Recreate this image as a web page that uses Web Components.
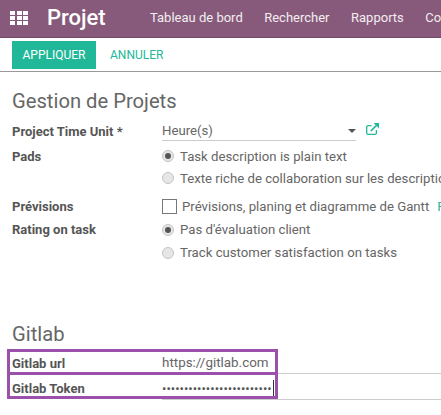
<!DOCTYPE html>
<html>
<head>
<meta charset="utf-8">
<style>
html,body{margin:0;padding:0;height:415px;width:441px;overflow:hidden;background:#fff;font-family:Roboto,"Liberation Sans",sans-serif;color:#4c4c4c}
</style>
</head>
<body>
<app-navbar>
  <nav-item>Tableau de bord</nav-item>
  <nav-item>Rechercher</nav-item>
  <nav-item>Rapports</nav-item>
  <nav-item>Configuration</nav-item>
</app-navbar>
<app-toolbar></app-toolbar>
<form-section title="Gestion de Projets" style="--top:17px">
  <form-row label="Project Time Unit *" style="--h:24px">
    <select-field value="Heure(s)"></select-field>
  </form-row>
  <form-row label="Pads" style="--h:22px;--mt:2px">
    <radio-option checked>Task description is plain text</radio-option>
  </form-row>
  <form-row style="--h:22px">
    <radio-option>Texte riche de collaboration sur les descriptions</radio-option>
  </form-row>
  <form-row label="Prévisions" style="--h:23px;--mt:6px">
    <check-option note="Pour">Prévisions, planing et diagramme de Gantt</check-option>
  </form-row>
  <form-row label="Rating on task" style="--h:23px">
    <radio-option checked>Pas d'évaluation client</radio-option>
  </form-row>
  <form-row style="--h:23px">
    <radio-option>Track customer satisfaction on tasks</radio-option>
  </form-row>
</form-section>
<form-section title="Gitlab" style="--top:58px">
  <form-row label="Gitlab url" style="--h:22px">
    <text-field>https://gitlab.com</text-field>
  </form-row>
  <form-row label="Gitlab Token" style="--h:23px;--mt:3px">
    <text-field password>•••••••••••••••••••••••••</text-field>
  </form-row>
  <mark-box style="left:7px;top:85px;width:271px;height:26px"></mark-box>
  <mark-box style="left:7px;top:108px;width:271px;height:27px"></mark-box>
</form-section>

<script>
function shadow(el, html){
    el.attachShadow({mode:'open'})
    el.shadowRoot.innerHTML = html
}

class AppNavbar extends HTMLElement{
    constructor(){
        super()
        let cells = ''
        for(let i = 0; i < 9; i++) cells += '<i></i>'
        shadow(this, `
        <style>
            :host{display:flex;align-items:center;height:35px;padding-bottom:2px;background:#875A7B;border-bottom:1px solid #6f4a66;color:#fff;white-space:nowrap;overflow:hidden}
            .apps{display:grid;grid-template-columns:repeat(3,5px);grid-auto-rows:4px;column-gap:1.5px;row-gap:1px;margin-left:10px;width:18px;flex:none}
            .apps i{background:#fff;display:block}
            .brand{font-size:22px;font-weight:500;margin-left:19px;width:58px;flex:none}
            .menu{display:flex;margin-left:45px;gap:21.5px}
        </style>
        <div class="apps">${cells}</div>
        <div class="brand">Projet</div>
        <div class="menu"><slot></slot></div>`)
    }
}

class NavItem extends HTMLElement{
    constructor(){
        super()
        shadow(this, `
        <style>:host{display:block;font-size:13px;color:#f3edf1}</style>
        <slot></slot>`)
    }
}

class AppToolbar extends HTMLElement{
    constructor(){
        super()
        shadow(this, `
        <style>
            :host{display:flex;align-items:center;height:33px;border-bottom:1px solid #999;padding-left:12px;font-size:12px}
            .ok{background:#21b799;color:#fff;height:28px;width:84px;display:flex;align-items:center;justify-content:center}
            .no{color:#21b799;margin-left:14px}
        </style>
        <div class="ok">APPLIQUER</div>
        <div class="no">ANNULER</div>`)
    }
}

class FormSection extends HTMLElement{
    constructor(){
        super()
        shadow(this, `
        <style>
            :host{display:block;position:relative;padding:var(--top) 0 0 12px}
            h2{margin:0 0 6px;font-size:20.2px;font-weight:400;line-height:24px;color:#666}
        </style>
        <h2>${this.getAttribute('title')}</h2>
        <slot></slot>`)
    }
}

class FormRow extends HTMLElement{
    constructor(){
        super()
        shadow(this, `
        <style>
            :host{display:flex;align-items:center;height:var(--h);margin-top:var(--mt,0);font-size:13.2px;white-space:nowrap;overflow:hidden}
            .label{width:150px;flex:none;font-weight:700;font-size:13px;color:#555}
            .value{flex:1;min-width:0}
        </style>
        <div class="label">${this.getAttribute('label') || ''}</div>
        <div class="value"><slot></slot></div>`)
    }
}

class SelectField extends HTMLElement{
    constructor(){
        super()
        shadow(this, `
        <style>
            :host{display:flex;align-items:center}
            .box{width:194px;height:19px;border-bottom:1px solid #ccc;display:flex;align-items:center;justify-content:space-between;color:#666}
            .caret{width:0;height:0;border:4px solid transparent;border-top:4px solid #555;border-bottom:0}
            svg{margin-left:10px;margin-top:-5px}
        </style>
        <div class="box"><span>${this.getAttribute('value')}</span><span class="caret"></span></div>
        <svg width="13" height="12" viewBox="0 0 13 12" fill="none" stroke="#21b799" stroke-width="1.3">
            <path d="M10.4 7v2.8a1.4 1.4 0 0 1-1.4 1.5H2.1a1.4 1.4 0 0 1-1.4-1.5V4a1.4 1.4 0 0 1 1.4-1.4h3.4"/>
            <path d="M4.8 8l5.4-5.4" stroke-width="1.7"/>
            <path d="M7.6 0H13v5.4z" fill="#21b799" stroke="none"/>
        </svg>`)
    }
}

class RadioOption extends HTMLElement{
    constructor(){
        super()
        const dot = this.hasAttribute('checked') ? '<i></i>' : ''
        shadow(this, `
        <style>
            :host{display:flex;align-items:center;color:#666}
            .r{width:10px;height:10px;border-radius:50%;border:1px solid #c4c4c4;background:#e6e6e6;margin-right:6px;display:flex;align-items:center;justify-content:center;flex:none}
            .r i{width:6px;height:6px;border-radius:50%;background:#555;display:block}
        </style>
        <span class="r">${dot}</span><slot></slot>`)
    }
}

class CheckOption extends HTMLElement{
    constructor(){
        super()
        shadow(this, `
        <style>
            :host{display:flex;align-items:center;color:#666}
            .c{width:13px;height:13px;border:1px solid #777;background:#fff;margin-right:5px;flex:none}
            .n{color:#21b799;margin-left:8px}
        </style>
        <span class="c"></span><slot></slot><span class="n">${this.getAttribute('note')}</span>`)
    }
}

class TextField extends HTMLElement{
    constructor(){
        super()
        const pw = this.hasAttribute('password')
        shadow(this, `
        <style>
            :host{display:block;color:#666}
            .t{display:flex;align-items:center;height:calc(var(--h) - 1px);border-bottom:1px solid #ccc;font-size:${pw ? '13px' : '13.4px'};${pw ? 'color:#555' : ''}}
            .caret{width:1px;height:16px;background:#333;margin-left:1px}
        </style>
        <div class="t"><slot></slot>${pw ? '<span class="caret"></span>' : ''}</div>`)
    }
}

class MarkBox extends HTMLElement{
    constructor(){
        super()
        shadow(this, `
        <style>:host{display:block;position:absolute;box-sizing:border-box;border:3px solid #9b51ac;pointer-events:none}</style>`)
    }
}

customElements.define('app-navbar',AppNavbar)
customElements.define('nav-item',NavItem)
customElements.define('app-toolbar',AppToolbar)
customElements.define('form-section',FormSection)
customElements.define('form-row',FormRow)
customElements.define('select-field',SelectField)
customElements.define('radio-option',RadioOption)
customElements.define('check-option',CheckOption)
customElements.define('text-field',TextField)
customElements.define('mark-box',MarkBox)
</script>
</body>
</html>
